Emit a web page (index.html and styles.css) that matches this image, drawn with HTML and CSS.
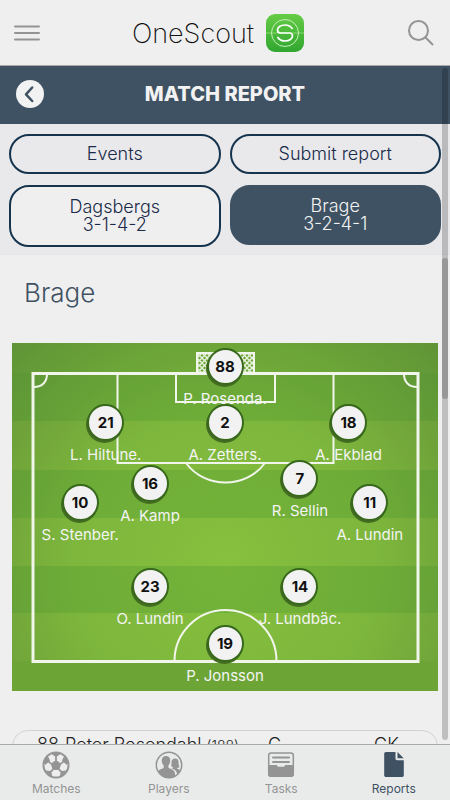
FILE: index.html
```html
<!DOCTYPE html>
<html lang="en">
<head>
    <meta charset="UTF-8">
    <meta name="viewport" content="width=device-width, initial-scale=1.0">
    <title>OneScout - Match Report</title>
    <link rel="stylesheet" href="styles.css">
</head>
<body>

<header class="topbar">
    <button class="icon-button" aria-label="Menu">
        <svg width="26" height="26" viewBox="0 0 26 26" fill="none" stroke="#949494" stroke-width="2" stroke-linecap="round"><path d="M1 6.500h24M1 13h24M1 19.500h24"/></svg>
    </button>
    <div class="brand">
        <span>OneScout</span>
        <svg width="38" height="38" viewBox="0 0 38 38" fill="none">
            <defs>
                <linearGradient id="logo-fill" x1="0" y1="0" x2="0" y2="1">
                    <stop offset="0" stop-color="#66cc45"/>
                    <stop offset="1" stop-color="#30a630"/>
                </linearGradient>
            </defs>
            <rect width="38" height="38" rx="9" fill="url(#logo-fill)"/>
            <path d="M0 19h38" stroke="#8bd775" stroke-width="1"/>
            <circle cx="19" cy="19" r="13.500" stroke="#c6efb9" stroke-width="1"/>
            <path d="M26.500 15C25 12.500 22.500 11 19 11c-4.500 0-7.500 2.500-7.500 5 0 2 1.200 3 3 3h9c1.800 0 3 1 3 3 0 2.500-3 5-7.500 5-3.500 0-6-1.500-7.500-4" stroke="#fff" stroke-width="1.700"/>
        </svg>
    </div>
    <button class="icon-button" aria-label="Search">
        <svg width="26" height="26" viewBox="0 0 26 26" fill="none" stroke="#949494" stroke-width="2"><circle cx="10.500" cy="10.500" r="9.500"/><path d="M17.300 17.300L25 25"/></svg>
    </button>
</header>

<div class="page">
    <div class="title-bar">
        <button class="back" aria-label="Back">
            <svg width="28" height="28" viewBox="0 0 28 28" fill="none" stroke="#3f5263" stroke-width="2.500" stroke-linecap="round" stroke-linejoin="round"><path d="M16.200 7.500L10 14.300l6.200 6.700"/></svg>
        </button>
        <h1>MATCH REPORT</h1>
    </div>

    <div class="actions">
        <button class="pill">Events</button>
        <button class="pill">Submit report</button>
        <button class="pill team">Dagsbergs<br>3-1-4-2</button>
        <button class="pill team active">Brage<br>3-2-4-1</button>
    </div>

    <main class="content">
        <h2>Brage</h2>

        <div class="pitch">
            <svg class="field" viewBox="0 0 426 348" fill="none">
                <defs>
                    <radialGradient id="grass" cx="213" cy="222" r="310" gradientUnits="userSpaceOnUse">
                        <stop offset="0" stop-color="#86c03d"/>
                        <stop offset="0.5" stop-color="#7db63c"/>
                        <stop offset="1" stop-color="#649438"/>
                    </radialGradient>
                    <pattern id="net" width="5" height="5" patternUnits="userSpaceOnUse">
                        <path d="M0 0l5 5M5 0L0 5" stroke="#eaf3e0" stroke-width="1.300"/>
                    </pattern>
                </defs>
                <path fill="url(#grass)" d="M0 0h426v348H0z"/>
                <path fill="#3f8f2c" fill-opacity="0.24" d="M0 30h426v48H0zM0 127h426v48H0zM0 223h426v47H0z"/>
                <path fill="#6ca436" d="M0 318h426v30H0z"/>
                <path fill="#3f8f2c" fill-opacity="0.1" d="M0 0h426v30H0z"/>
                <path fill="url(#net)" stroke="#f2f5ec" stroke-width="2" d="M185 30V10h57v20"/>
                <g stroke="#f2f5ec" stroke-width="2">
                    <path d="M105.500 30v90h216V30M164 30v29h99V30"/>
                    <path d="M174 120c19 26 60 26 79 0M162.500 318a51 51 0 0 1 102 0"/>
                    <path d="M35 31c0 8-5 13-13 13M392 31c0 8 5 13 13 13"/>
                </g>
                <path stroke="#f2f5ec" stroke-width="3" d="M21 30.500h385v288H21z"/>
            </svg>
            <div class="player keeper"><b>88</b><span>P. Rosenda.</span></div>
            <div class="player back-left"><b>21</b><span>L. Hiltune.</span></div>
            <div class="player back-center"><b>2</b><span>A. Zetters.</span></div>
            <div class="player back-right"><b>18</b><span>A. Ekblad</span></div>
            <div class="player mid-left"><b>16</b><span>A. Kamp</span></div>
            <div class="player mid-right"><b>7</b><span>R. Sellin</span></div>
            <div class="player wing-left"><b>10</b><span>S. Stenber.</span></div>
            <div class="player wing-right"><b>11</b><span>A. Lundin</span></div>
            <div class="player attack-left"><b>23</b><span>O. Lundin</span></div>
            <div class="player attack-right"><b>14</b><span>J. Lundbäc.</span></div>
            <div class="player striker"><b>19</b><span>P. Jonsson</span></div>
        </div>

        <div class="player-card">
            <span>88.</span>
            <span class="name">Peter Rosendahl <small>(188)</small></span>
            <span class="foot">G</span>
            <span>GK</span>
        </div>
    </main>
    <div class="scroll-track"><div class="scroll-thumb"></div></div>
</div>

<nav class="tabs">
    <a href="#matches">
        <svg width="28" height="28" viewBox="0 0 28 28">
            <circle cx="14" cy="14" r="12.500" fill="#ecedec" stroke="#949494" stroke-width="2"/>
            <path fill="#949494" stroke="#949494" stroke-linejoin="round" d="M14 9.500l4.700 3.400-1.800 5.500h-5.800l-1.800-5.500zM9.500 2.500h9L14 5.500zM1.500 11L5 4.500l2.500 5-4 3.800zM26.500 11L23 4.500l-2.500 5 4 3.800zM4 20l4.500.5 1.500 5.500zM24 20l-4.500.5-1.500 5.500z"/>
            <path fill="none" stroke="#949494" stroke-width="1.800" d="M14 9.500v-5M18.700 12.900l4-3.400M16.900 18.400l3.100 3.100M11.100 18.400L8 21.500M9.300 12.900l-4-3.400"/>
        </svg>
        Matches
    </a>
    <a href="#players">
        <svg width="28" height="28" viewBox="0 0 28 28">
            <circle cx="14" cy="14" r="12.700" fill="none" stroke="#949494" stroke-width="1.500"/>
            <path fill="#949494" d="M11 5c3 0 4.500 2 4.200 5-.2 2-.8 3.400-1.800 4.500v2c0 1 5 1.700 6 4 .7 1.500.8 3.500.8 5-4.500 3-14 2.400-17-5.500 1.500-2 5.500-2.300 5.500-3.500v-2C7.500 13.400 7 12 6.800 10 6.500 7 8 5 11 5z"/>
            <path fill="#949494" d="M20 7.500c2.400 0 3.600 1.500 3.600 4 0 2 .3 3.500.9 4.500-.7.700-1.700 1-2.500 1 0 1.300 2.500 1.500 4 2.500-.7 1.700-2 3.400-3.700 4.500-.3-2.500-.8-4.500-4-6l-1.800-.8c1-.3 1.700-.7 1.700-1.200-.8 0-1.500-.3-2-.8.300-2 .2-2.700.3-4 .1-2.400 1.300-3.700 3.500-3.700z"/>
        </svg>
        Players
    </a>
    <a href="#tasks">
        <svg width="28" height="28" viewBox="0 0 28 28">
            <rect x="1.700" y="2" width="24.600" height="23" rx="2.500" fill="none" stroke="#949494" stroke-width="1.500"/>
            <path fill="#949494" d="M1 14h8.500c.8 0 .8 1.800 2 1.800h5c1.200 0 1.200-1.800 2-1.800H27v9.500c0 1.500-1 2.500-2.500 2.500h-21C2 26 1 25 1 23.500z"/>
            <path stroke="#949494" stroke-width="2" stroke-linecap="round" d="M6 6.500h16M6 11h16"/>
        </svg>
        Tasks
    </a>
    <a href="#reports" class="active">
        <svg width="28" height="28" viewBox="0 0 28 28" fill="#3f5263">
            <path d="M6 1h9.500v6.500c0 1 .7 1.700 1.700 1.700h6.600v15c0 1-.8 1.800-1.800 1.800H6c-1 0-1.800-.8-1.800-1.800V2.800C4.200 1.800 5 1 6 1z"/>
            <path d="M17.500 1l6.200 6.200h-6.200z"/>
        </svg>
        Reports
    </a>
</nav>

</body>
</html>
```

FILE: styles.css
```css
* {
    box-sizing: border-box;
}
body {
    margin: 0;
    height: 100vh;
    display: flex;
    flex-direction: column;
    overflow: hidden;
    background-color: #efefef;
    color: #3f5263;
    font-family: Inter, sans-serif;
    font-weight: 300;
}
button {
    font: inherit;
    color: inherit;
    cursor: pointer;
}
svg {
    display: block;
}
.topbar {
    display: flex;
    align-items: center;
    justify-content: space-between;
    padding: 14px 16px 13px 14px;
    border-bottom: 1px solid #aaa;
}
.icon-button {
    padding: 0;
    border: none;
    background: none;
}
.brand {
    display: flex;
    align-items: center;
    gap: 12px;
    margin-right: 12px;
    color: #111;
    font-size: 27px;
    font-weight: 200;
}
.page {
    position: relative;
    flex: 1;
    min-height: 0;
    display: flex;
    flex-direction: column;
}
.title-bar {
    display: grid;
    grid-template-columns: 28px 1fr 28px;
    align-items: center;
    padding: 14px 16px 16px;
    background-color: #3f5263;
    color: #f2f2f2;
}
.title-bar h1 {
    margin: 0;
    font-size: 20px;
    line-height: 24px;
    font-weight: 800;
    text-align: center;
}
.back {
    width: 28px;
    height: 28px;
    padding: 0;
    border: none;
    border-radius: 50%;
    background-color: #f2f2f2;
}
.actions {
    display: grid;
    grid-template-columns: 1fr 1fr;
    gap: 11px 9px;
    padding: 10px 9px 7px;
    background-color: #e9e9eb;
    border-bottom: 1px solid #e4e4e6;
}
.pill {
    height: 40px;
    padding: 0;
    border: 2px solid #16344e;
    border-radius: 20px;
    background: none;
    color: #1a2b4a;
    font-size: 18px;
    line-height: 18px;
}
.team {
    height: 62px;
    background-color: #efefef;
}
.team.active {
    height: 60px;
    border-color: #3f5263;
    background-color: #3f5263;
    color: #f2f2f2;
}
.content {
    flex: 1;
    min-height: 0;
    padding: 23px 12px 0;
    overflow: hidden;
}
.content h2 {
    margin: 0 12px 35px;
    font-size: 26px;
    line-height: 30px;
    font-weight: 300;
}
.pitch {
    position: relative;
}
.field {
    width: 100%;
}
/* players are placed on the pitch by the centre of their shirt number */
.player {
    position: absolute;
    display: flex;
    flex-direction: column;
    align-items: center;
    gap: 4px;
    width: 100px;
    margin: -19px 0 0 -50px;
    color: #f4f4f4;
    font-size: 15px;
    line-height: 20px;
    font-weight: 400;
}
.player b {
    width: 37px;
    height: 37px;
    border: 2px solid #37681c;
    border-radius: 50%;
    background-color: #f2f2f2;
    box-shadow: -1px 2px 0 #446d22;
    color: #111;
    font-size: 15px;
    line-height: 33px;
    font-weight: 700;
    text-align: center;
}
.keeper {
    left: 50%;
    top: 7%;
}
.back-left {
    left: 22%;
    top: 23%;
}
.back-center {
    left: 50%;
    top: 23%;
}
.back-right {
    left: 79%;
    top: 23%;
}
.mid-left {
    left: 32.4%;
    top: 40.4%;
}
.mid-right {
    left: 67.6%;
    top: 39%;
}
.wing-left {
    left: 16%;
    top: 46%;
}
.wing-right {
    left: 84%;
    top: 46%;
}
.attack-left {
    left: 32.4%;
    top: 70%;
}
.attack-right {
    left: 67.6%;
    top: 70%;
}
.striker {
    left: 50%;
    top: 86.4%;
}
.player-card {
    display: flex;
    margin-top: 39px;
    padding: 2px 38px 12px 24px;
    border: 1px solid #d2d2d2;
    border-radius: 16px;
    color: #222;
    font-size: 18px;
    line-height: 24px;
}
.player-card .name {
    width: 192px;
}
.player-card span:first-child {
    width: 28px;
}
.player-card small {
    font-size: 14px;
}
.player-card .foot {
    flex: 1;
    margin-left: 11px;
}
.scroll-track {
    position: absolute;
    top: 2px;
    right: 2px;
    bottom: 4px;
    width: 6px;
    border-radius: 3px;
    background-color: rgba(0, 0, 0, 0.2);
}
.scroll-thumb {
    height: 21%;
    margin-top: 190px;
    border-radius: 3px;
    background-color: rgba(0, 0, 0, 0.2);
}
.tabs {
    display: grid;
    grid-template-columns: repeat(4, 1fr);
    padding: 6px 0 3px;
    border-top: 1px solid #a8a8a8;
    background-color: #e9ebea;
}
.tabs a {
    display: flex;
    flex-direction: column;
    align-items: center;
    gap: 2px;
    color: #949494;
    font-size: 12px;
    line-height: 16px;
    font-weight: 400;
    text-decoration: none;
}
.tabs .active {
    color: #3f5263;
}
```
